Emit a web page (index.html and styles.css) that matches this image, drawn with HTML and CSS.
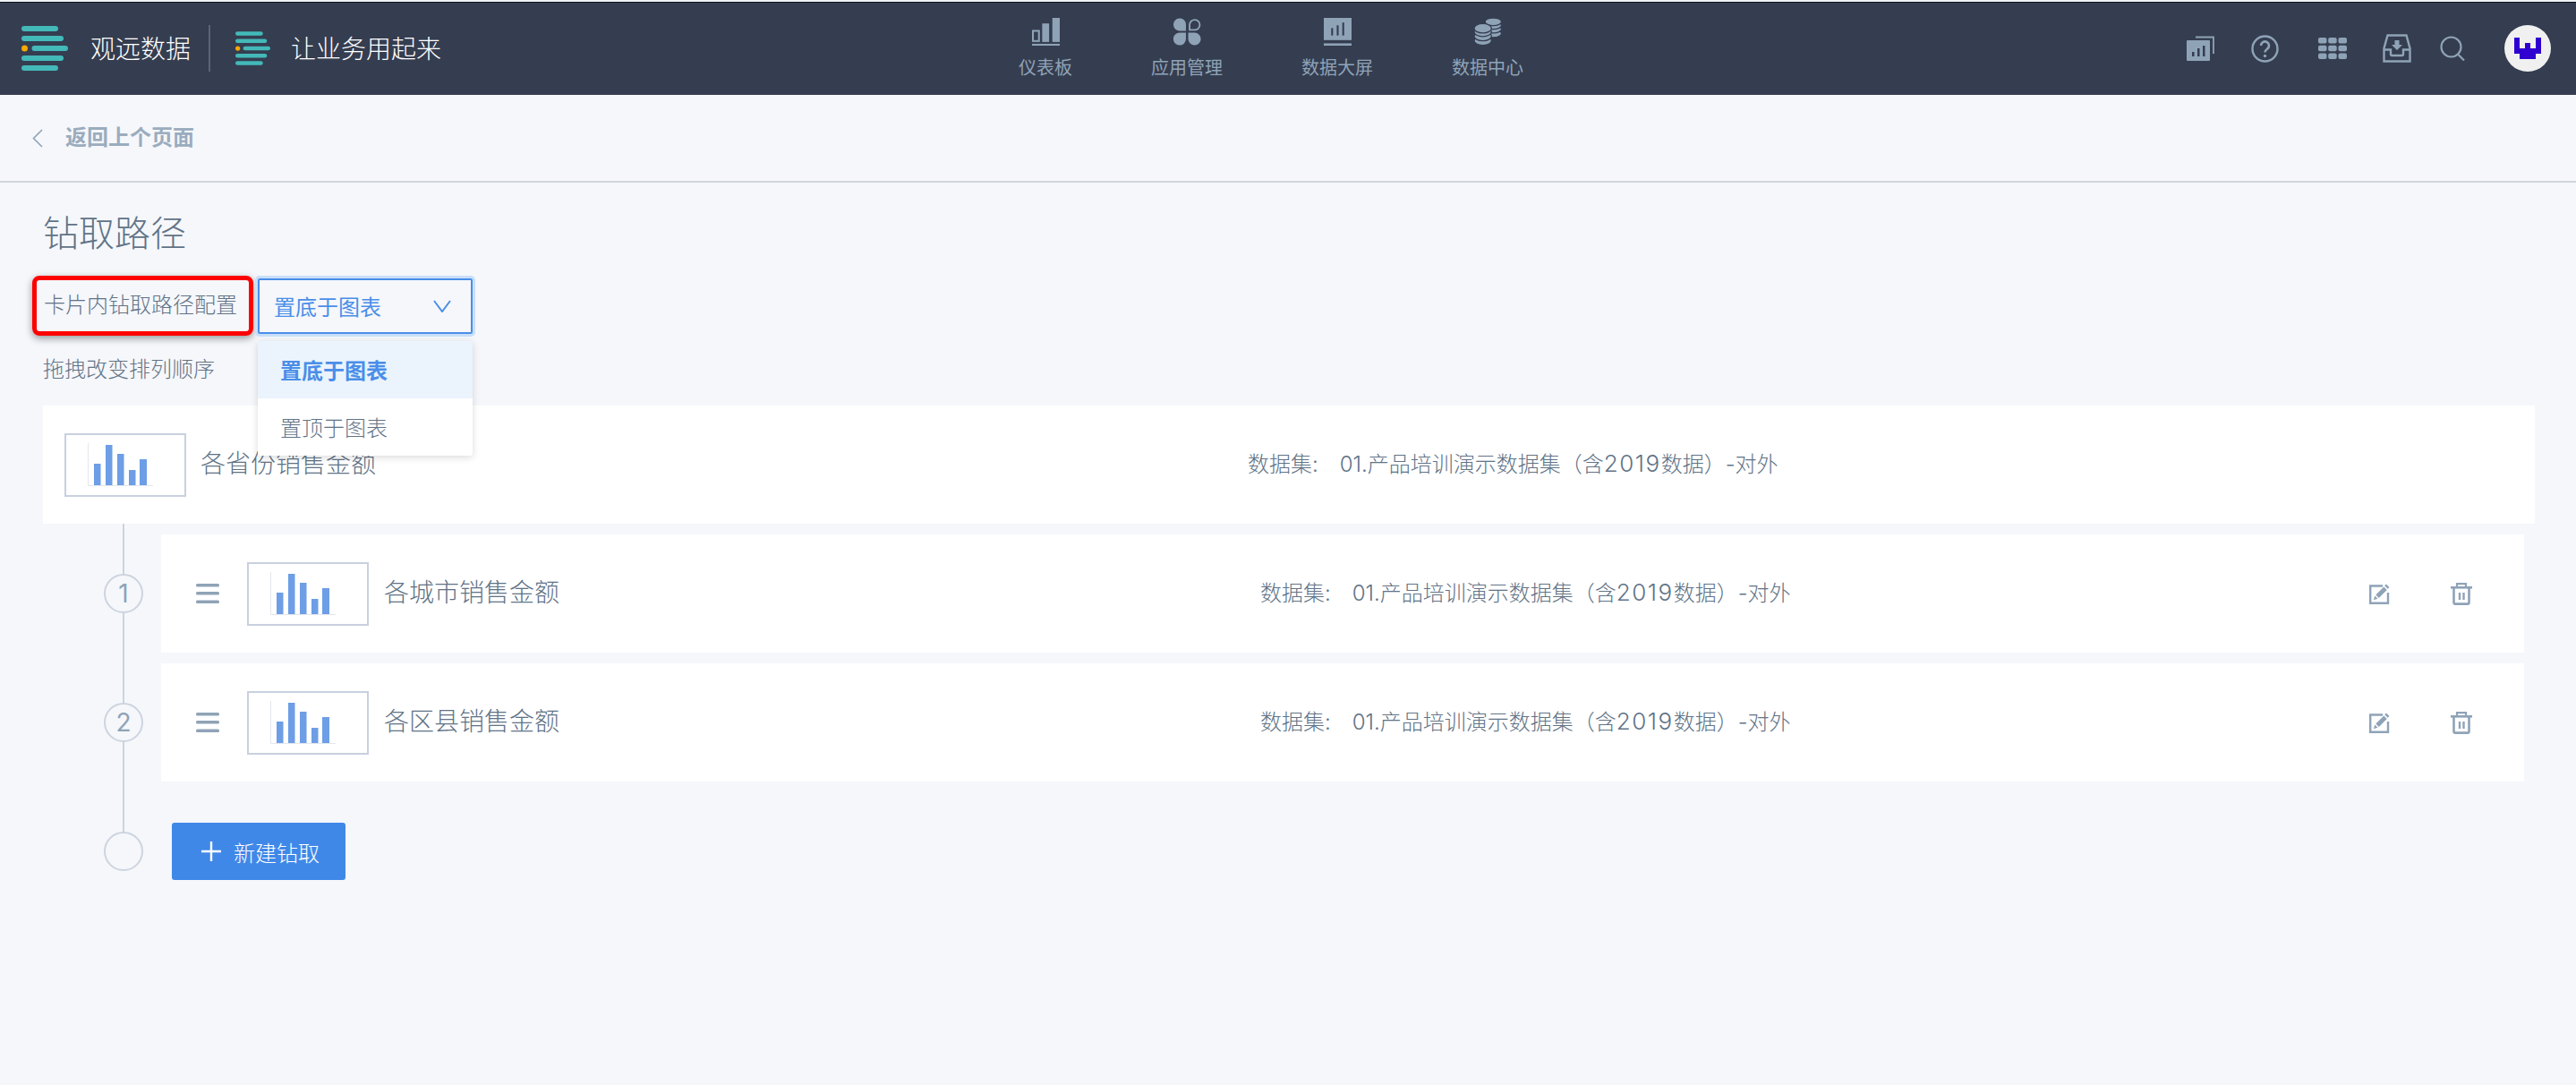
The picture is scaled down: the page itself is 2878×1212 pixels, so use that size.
FILE: index.html
```html
<!DOCTYPE html>
<html>
<head>
    <meta charset="utf-8">
    <link rel="stylesheet" href="styles.css">
</head>
<body>
    <svg class="defs" width="0" height="0">
        <symbol id="logo" viewBox="0 0 52 50">
            <rect x="0" y="0" width="41" height="6" rx="3" fill="#43b9b9"/>
            <rect x="0" y="11" width="47" height="6" rx="3" fill="#43b9b9"/>
            <rect x="11.500" y="22" width="40.500" height="6" rx="3" fill="#43b9b9"/>
            <circle cx="3.500" cy="25" r="3.500" fill="#f5a800"/>
            <rect x="0" y="33" width="47" height="6" rx="3" fill="#43b9b9"/>
            <rect x="0" y="44" width="41" height="6" rx="3" fill="#43b9b9"/>
        </symbol>
        <symbol id="chart" viewBox="0 0 73 48">
            <path d="M0.500 0V47.500H73" fill="none" stroke="#e3e6ec"/>
            <rect x="7" y="23" width="7.500" height="24" fill="#6d9ee6"/>
            <rect x="20" y="2" width="7.500" height="45" fill="#6d9ee6"/>
            <rect x="33" y="12" width="7.500" height="35" fill="#6d9ee6"/>
            <rect x="46" y="30" width="7.500" height="17" fill="#6d9ee6"/>
            <rect x="58" y="18" width="8" height="29" fill="#6d9ee6"/>
        </symbol>
        <symbol id="drag" viewBox="0 0 26 22">
            <rect x="0" y="0" width="26" height="3.500" rx="1.500" fill="#8fa3b7"/>
            <rect x="0" y="9" width="26" height="3.500" rx="1.500" fill="#8fa3b7"/>
            <rect x="0" y="18.500" width="26" height="3.500" rx="1.500" fill="#8fa3b7"/>
        </symbol>
        <symbol id="edit" viewBox="0 0 23 23">
            <path d="M15 2.500H1.200V21.800H21V10" fill="none" stroke="#8fa3b7" stroke-width="2.400"/>
            <path d="M19 0.500l3.500 3.500-1.800 1.800-3.500-3.500zM16.300 3.600l3.500 3.500-9 9-3.500-3.500zM6.300 13.600l3.200 3.200-4.700 1.500z" fill="#8fa3b7"/>
        </symbol>
        <symbol id="trash" viewBox="0 0 24 25">
            <path d="M7 4V1.200h10V4" fill="none" stroke="#8fa3b7" stroke-width="2.200"/>
            <rect x="0" y="4" width="24" height="2.600" fill="#8fa3b7"/>
            <path d="M3.500 6v16.300a1.300 1.300 0 0 0 1.300 1.300h14.400a1.300 1.300 0 0 0 1.300-1.300V6" fill="none" stroke="#8fa3b7" stroke-width="2.600"/>
            <rect x="8.800" y="11" width="2.400" height="8" fill="#8fa3b7"/>
            <rect x="13.300" y="11" width="2.400" height="8" fill="#8fa3b7"/>
        </symbol>
    </svg>

    <!-- Barra superior -->
    <header class="topbar">
        <div class="brand">
            <svg class="logo-main"><use href="#logo"/></svg>
            <span class="brand-text">观远数据</span>
            <span class="brand-divider"></span>
            <svg class="logo-small"><use href="#logo"/></svg>
            <span class="brand-text slogan">让业务用起来</span>
        </div>

        <nav class="main-nav">
            <a class="nav-item">
                <svg class="nav-icon" viewBox="0 0 30 30">
                    <rect x="1" y="14" width="6.500" height="11" fill="none" stroke="#8fa3b7" stroke-width="2"/>
                    <rect x="11" y="6" width="7.500" height="20" fill="#8fa3b7"/>
                    <rect x="22" y="0" width="8" height="26" fill="#8fa3b7"/>
                    <rect x="0" y="28" width="30" height="2.400" fill="#8fa3b7"/>
                </svg>
                <span>仪表板</span>
            </a>
            <a class="nav-item">
                <svg class="nav-icon" viewBox="0 0 30 30">
                    <path d="M13.500 14H7a6.800 6.800 0 1 1 6.500-8z" fill="#8fa3b7"/>
                    <path d="M17.500 13V7a5.500 5.500 0 1 1 5.500 6z" fill="none" stroke="#8fa3b7" stroke-width="1.800"/>
                    <path d="M13.500 16v7a6.800 6.800 0 1 1-6.800-7z" fill="#8fa3b7"/>
                    <path d="M16 16h7a6.800 6.800 0 1 1-7 7z" fill="#8fa3b7"/>
                </svg>
                <span>应用管理</span>
            </a>
            <a class="nav-item">
                <svg class="nav-icon" viewBox="0 0 30 30">
                    <rect x="0" y="0" width="30" height="24" fill="#8fa3b7"/>
                    <rect x="8" y="11" width="2" height="8" fill="#353d50"/>
                    <rect x="14" y="8" width="2" height="11" fill="#353d50"/>
                    <rect x="20" y="5" width="2" height="14" fill="#353d50"/>
                    <rect x="0" y="27.500" width="30" height="2.500" fill="#8fa3b7"/>
                </svg>
                <span>数据大屏</span>
            </a>
            <a class="nav-item">
                <svg class="nav-icon" viewBox="0 0 32 32">
                    <ellipse cx="22" cy="18" rx="9.500" ry="4.500" fill="#8fa3b7" stroke="#353d50" stroke-width="1.300"/>
                    <ellipse cx="22" cy="13" rx="9.500" ry="4.500" fill="#8fa3b7" stroke="#353d50" stroke-width="1.300"/>
                    <ellipse cx="22" cy="8.500" rx="9.500" ry="4.500" fill="#8fa3b7" stroke="#353d50" stroke-width="1.300"/>
                    <ellipse cx="22" cy="4.500" rx="9.500" ry="4.500" fill="#8fa3b7" stroke="#353d50" stroke-width="1.300"/>
                    <ellipse cx="10" cy="26" rx="10" ry="5.500" fill="#8fa3b7" stroke="#353d50" stroke-width="1.300"/>
                    <ellipse cx="10" cy="21" rx="10" ry="5.500" fill="#8fa3b7" stroke="#353d50" stroke-width="1.300"/>
                    <ellipse cx="10" cy="16" rx="10" ry="5.500" fill="#8fa3b7" stroke="#353d50" stroke-width="1.300"/>
                    <ellipse cx="10" cy="12" rx="10" ry="5.500" fill="#8fa3b7" stroke="#353d50" stroke-width="1.300"/>
                </svg>
                <span>数据中心</span>
            </a>
        </nav>

        <div class="tools">
            <svg class="tool tool-report" width="31" height="28" viewBox="0 0 31 28">
                <path d="M10 1.500H30V20" fill="none" stroke="#8fa3b7" stroke-width="1.800"/>
                <rect x="0" y="5" width="26" height="23" rx="1" fill="#8fa3b7"/>
                <rect x="6" y="18" width="2.500" height="5" fill="#353d50"/>
                <rect x="12" y="14" width="2.500" height="9" fill="#353d50"/>
                <rect x="18" y="11" width="2.500" height="12" fill="#353d50"/>
            </svg>
            <svg class="tool tool-help" width="31" height="31" viewBox="0 0 31 31">
                <circle cx="15.500" cy="15.500" r="14" fill="none" stroke="#8fa3b7" stroke-width="2.400"/>
                <path d="M11 12a4.500 4.500 0 1 1 7 3.700c-1.700 1.200-2.500 2-2.500 3.800" fill="none" stroke="#8fa3b7" stroke-width="2.600"/>
                <circle cx="15.500" cy="23.500" r="1.700" fill="#8fa3b7"/>
            </svg>
            <svg class="tool tool-grid" width="32" height="24" viewBox="0 0 32 24">
                <rect x="0" y="0" width="9.500" height="6.500" rx="2" fill="#8fa3b7"/>
                <rect x="11.200" y="0" width="9.500" height="6.500" rx="2" fill="#8fa3b7"/>
                <rect x="22.500" y="0" width="9.500" height="6.500" rx="2" fill="#8fa3b7"/>
                <rect x="0" y="8.800" width="9.500" height="6.500" rx="2" fill="#8fa3b7"/>
                <rect x="11.200" y="8.800" width="9.500" height="6.500" rx="2" fill="#8fa3b7"/>
                <rect x="22.500" y="8.800" width="9.500" height="6.500" rx="2" fill="#8fa3b7"/>
                <rect x="0" y="17.500" width="9.500" height="6.500" rx="2" fill="#8fa3b7"/>
                <rect x="11.200" y="17.500" width="9.500" height="6.500" rx="2" fill="#8fa3b7"/>
                <rect x="22.500" y="17.500" width="9.500" height="6.500" rx="2" fill="#8fa3b7"/>
            </svg>
            <svg class="tool tool-inbox" width="32" height="32" viewBox="0 0 32 32">
                <path d="M5.500 1.500H26.500L30.500 16V30.500H1.500V16z" fill="none" stroke="#8fa3b7" stroke-width="2.400"/>
                <path d="M2 17.500H9V22.500a1.500 1.500 0 0 0 1.500 1.500H21.500a1.500 1.500 0 0 0 1.500-1.500V17.500H30" fill="none" stroke="#8fa3b7" stroke-width="2.400"/>
                <path d="M13.500 7H18.500V12H22L16 18 10 12H13.500z" fill="#8fa3b7"/>
            </svg>
            <svg class="tool tool-search" width="28" height="28" viewBox="0 0 28 28">
                <circle cx="12.500" cy="12.500" r="11" fill="none" stroke="#8fa3b7" stroke-width="2.200"/>
                <path d="M20.500 21L27 27.500" fill="none" stroke="#8fa3b7" stroke-width="2.200"/>
            </svg>
            <div class="avatar">
                <svg width="30" height="24" viewBox="0 0 30 24">
                    <path d="M0 0H6V12H12V6H18V12H24V0H30V18H24V24H6V18H0z" fill="#2f00d0"/>
                </svg>
            </div>
        </div>
    </header>

    <!-- Voltar -->
    <div class="backbar">
        <svg class="back-arrow" width="12" height="21" viewBox="0 0 12 21">
            <path d="M11 1L1.500 10.500 11 20" fill="none" stroke="#8fa3b7" stroke-width="1.600"/>
        </svg>
        <span class="back-text">返回上个页面</span>
    </div>

    <main class="content">
        <h1 class="page-title">钻取路径</h1>

        <div class="config-row">
            <div class="config-label">卡片内钻取路径配置</div>
            <div class="select">
                <span>置底于图表</span>
                <svg width="20" height="14" viewBox="0 0 20 14">
                    <path d="M1 1L10 13 19 1" fill="none" stroke="#4a8ee8" stroke-width="2"/>
                </svg>
                <ul class="select-menu">
                    <li class="selected">置底于图表</li>
                    <li>置顶于图表</li>
                </ul>
            </div>
        </div>

        <p class="hint">拖拽改变排列顺序</p>

        <div class="card root-card">
            <div class="thumb"><svg width="73" height="48"><use href="#chart"/></svg></div>
            <div class="card-name">各省份销售金额</div>
            <div class="card-dataset"><span class="ds-label">数据集:</span>01.产品培训演示数据集（含<span class="num">2019</span>数据）-对外</div>
        </div>

        <div class="steps">
            <div class="step-line"></div>

            <div class="step">
                <div class="step-num">1</div>
                <div class="card">
                    <svg class="drag" width="26" height="22"><use href="#drag"/></svg>
                    <div class="thumb"><svg width="73" height="48"><use href="#chart"/></svg></div>
                    <div class="card-name">各城市销售金额</div>
                    <div class="card-dataset"><span class="ds-label">数据集:</span>01.产品培训演示数据集（含<span class="num">2019</span>数据）-对外</div>
                    <div class="card-actions">
                        <svg width="23" height="23"><use href="#edit"/></svg>
                        <svg width="24" height="25"><use href="#trash"/></svg>
                    </div>
                </div>
            </div>

            <div class="step">
                <div class="step-num">2</div>
                <div class="card">
                    <svg class="drag" width="26" height="22"><use href="#drag"/></svg>
                    <div class="thumb"><svg width="73" height="48"><use href="#chart"/></svg></div>
                    <div class="card-name">各区县销售金额</div>
                    <div class="card-dataset"><span class="ds-label">数据集:</span>01.产品培训演示数据集（含<span class="num">2019</span>数据）-对外</div>
                    <div class="card-actions">
                        <svg width="23" height="23"><use href="#edit"/></svg>
                        <svg width="24" height="25"><use href="#trash"/></svg>
                    </div>
                </div>
            </div>

            <div class="step step-new">
                <div class="step-num"></div>
                <button class="add-button">
                    <svg width="22" height="22" viewBox="0 0 22 22">
                        <path d="M11 0V22M0 11H22" fill="none" stroke="#fff" stroke-width="2.400"/>
                    </svg>
                    新建钻取
                </button>
            </div>
        </div>
    </main>
</body>
</html>
```

FILE: styles.css
```css
* {
    box-sizing: border-box;
}
html, body {
    margin: 0;
    padding: 0;
}
body {
    width: 2878px;
    height: 1212px;
    overflow: hidden;
    background-color: #f5f7fb;
    font-family: "Noto Sans CJK SC", sans-serif;
    font-weight: 300;
    color: #617386;
}
.defs {
    position: absolute;
}

/* topbar */
.topbar {
    display: flex;
    align-items: center;
    height: 106px;
    background-color: #353d50;
    border-top: 2px solid #f0f2f5;
    box-shadow: inset 0 1px 0 #0d1420;
    padding-left: 24px;
}
.brand {
    display: flex;
    align-items: center;
    width: 1114px;
}
.logo-main {
    width: 52px;
    height: 50px;
}
.logo-small {
    width: 39px;
    height: 38px;
    margin-left: 28px;
}
.brand-text {
    padding-bottom: 3px;
    font-size: 28px;
    color: #fff;
    margin-left: 25px;
}
.brand-text.slogan {
    margin-left: 23px;
}
.brand-divider {
    width: 2px;
    height: 52px;
    background-color: #5a6478;
    margin-left: 20px;
}
.main-nav {
    display: flex;
    gap: 88px;
}
.nav-item {
    display: flex;
    flex-direction: column;
    align-items: center;
    gap: 10px;
    font-size: 20px;
    font-weight: normal;
    line-height: 28px;
    color: #8fa3b7;
}
.nav-icon {
    width: 31px;
    height: 31px;
}
.tools {
    display: flex;
    align-items: center;
    margin-left: auto;
    padding-right: 28px;
}
.tool-help {
    margin-left: 41px;
}
.tool-grid {
    margin-left: 44px;
}
.tool-inbox {
    margin-left: 40px;
}
.tool-search {
    margin-left: 32px;
}
.avatar {
    display: flex;
    align-items: center;
    justify-content: center;
    width: 52px;
    height: 52px;
    margin-left: 44px;
    border-radius: 50%;
    background-color: #f0f0f0;
}

/* back */
.backbar {
    display: flex;
    align-items: center;
    height: 98px;
    padding-left: 36px;
    border-bottom: 2px solid #d0d5dd;
}
.back-arrow {
    margin-right: 25px;
}
.back-text {
    padding-bottom: 6px;
    font-size: 24px;
    font-weight: bold;
    color: #9aacbe;
}

/* content */
.content {
    padding: 26px 46px 0 48px;
}
.page-title {
    margin: 0;
    font-size: 40px;
    font-weight: 300;
    line-height: 56px;
}
.config-row {
    display: flex;
    align-items: center;
    margin-top: 22px;
    margin-left: -12px;
}
.config-label {
    width: 247px;
    height: 67px;
    padding-left: 8px;
    border: 5px solid #f00;
    border-radius: 8px;
    box-shadow: 0 3px 9px rgba(0, 0, 0, 0.4);
    font-size: 24px;
    line-height: 52px;
    white-space: nowrap;
}
.select {
    position: relative;
    display: flex;
    align-items: center;
    justify-content: space-between;
    width: 240px;
    height: 62px;
    margin-left: 5px;
    padding: 0 22px 0 16px;
    border: 2px solid #4a8ee8;
    border-radius: 2px;
    box-shadow: 0 0 0 3px #c9dff9;
    font-size: 24px;
    font-weight: normal;
    color: #4a8ee8;
}
.select-menu {
    position: absolute;
    z-index: 5;
    left: -2px;
    top: 68px;
    width: 240px;
    margin: 0;
    padding: 0;
    list-style: none;
    background-color: #fff;
    border-radius: 3px;
    box-shadow: 0 2px 8px rgba(0, 0, 0, 0.15);
    font-weight: 300;
    color: #617386;
}
.select-menu li {
    height: 64px;
    padding-left: 25px;
    line-height: 64px;
}
.select-menu li.selected {
    background-color: #ebf3fd;
    color: #4a8ee8;
    font-weight: bold;
}
.hint {
    margin: 19px 0 0;
    font-size: 24px;
    line-height: 34px;
}

/* cards */
.card {
    display: flex;
    align-items: center;
    height: 132px;
    background-color: #fff;
}
.root-card {
    margin-top: 25px;
    padding-left: 24px;
}
.thumb {
    display: flex;
    align-items: center;
    flex: 0 0 136px;
    height: 71px;
    padding-left: 24px;
    border: 2px solid #c9d0df;
    background-color: #fff;
}
.card-name {
    flex: 0 0 979px;
    margin-left: 17px;
    padding-bottom: 6px;
    font-size: 28px;
}
.root-card .card-name {
    flex-basis: 1170px;
    margin-left: 16px;
}
.card-dataset {
    padding-bottom: 5px;
    font-family: Inter, "Noto Sans CJK SC", sans-serif;
    font-size: 24px;
    white-space: nowrap;
}
.ds-label {
    margin-right: 24px;
}
.num {
    font-size: 26px;
    letter-spacing: 1.500px;
}
.drag {
    flex: none;
    margin-left: 39px;
    margin-right: 31px;
}
.card-actions {
    display: flex;
    align-items: center;
    gap: 68px;
    margin-left: auto;
    padding-right: 58px;
}

/* steps */
.steps {
    position: relative;
    padding-left: 68px;
    padding-right: 12px;
}
.step-line {
    position: absolute;
    left: 89px;
    top: 0;
    bottom: 30px;
    width: 2px;
    background-color: #cdd4df;
}
.step {
    position: relative;
    display: flex;
    align-items: center;
    gap: 20px;
    padding-top: 12px;
}
.step .card {
    flex: 1;
}
.step-num {
    flex: none;
    display: flex;
    align-items: center;
    justify-content: center;
    width: 44px;
    height: 44px;
    border: 2px solid #cdd4df;
    border-radius: 50%;
    background-color: #f5f7fb;
    font-family: Inter, sans-serif;
    font-weight: normal;
    font-size: 28px;
    color: #8fa3b7;
}
.step-new {
    padding-top: 46px;
    gap: 32px;
}
.add-button {
    display: flex;
    align-items: center;
    gap: 14px;
    width: 194px;
    height: 64px;
    padding: 0 0 0 33px;
    border: none;
    border-radius: 3px;
    background-color: #4088e8;
    color: #fff;
    font-family: inherit;
    font-weight: 300;
    font-size: 24px;
}
```
